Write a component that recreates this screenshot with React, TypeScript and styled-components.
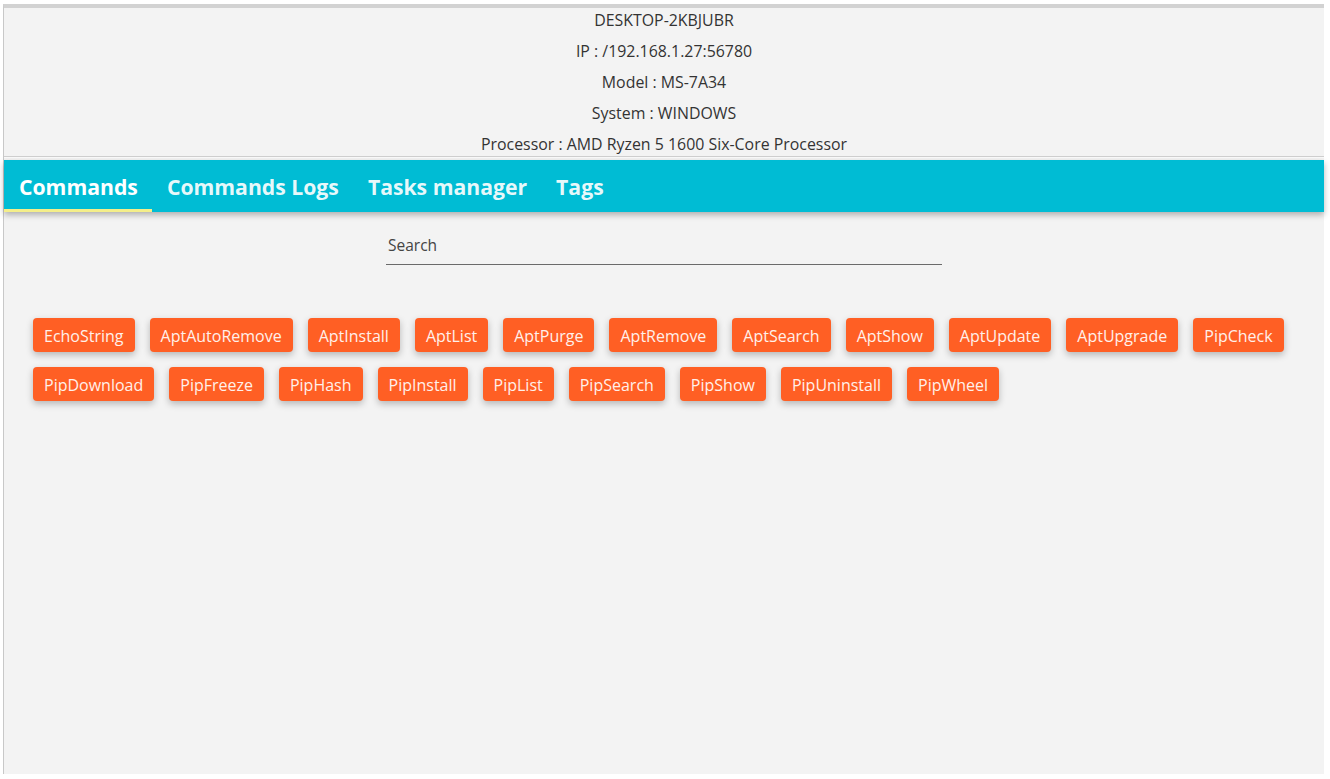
import * as React from "react";
import styled, { createGlobalStyle } from "styled-components";

const GlobalStyle = createGlobalStyle`
  html, body {
    margin: 0;
    padding: 0;
    background: #ffffff;
  }
  body {
    font-family: "Open Sans", "Noto Sans", sans-serif;
  }
`;

const Screen = styled.div`
  padding: 4px 0 0 3px;
  width: 1330px;
  height: 779px;
  box-sizing: border-box;
`;

const Window = styled.div`
  width: 1321px;
  height: 770px;
  box-sizing: border-box;
  display: flex;
  flex-direction: column;
  background: #f3f3f3;
  border-top: 4px solid #d2d2d2;
  border-left: 1px solid #c8c8c8;
`;

const Header = styled.div`
  display: flex;
  flex-direction: column;
  align-items: center;
  gap: 11px;
  padding-top: 2px;
`;

const InfoLine = styled.div`
  font-size: 15.9px;
  line-height: 20px;
  color: #333333;
`;

const Separator = styled.div`
  margin-top: 2px;
  height: 1px;
  background: #cfcfcf;
  border-bottom: 1px solid #fafafa;
`;

const TabBar = styled.div`
  margin-top: 2px;
  height: 52px;
  display: flex;
  background: #00bcd4;
  box-shadow: 0 3px 6px rgba(0, 0, 0, 0.28);
  position: relative;
  z-index: 1;
`;

const Tab = styled.div<{ $active?: boolean }>`
  display: flex;
  align-items: center;
  padding: 3px 14px 0 15px;
  box-sizing: border-box;
  font-size: 21.2px;
  font-weight: 700;
  color: ${(p) => (p.$active ? "#ffffff" : "rgba(255, 255, 255, 0.92)")};
  border-bottom: 3px solid ${(p) => (p.$active ? "#f4ee8a" : "transparent")};
`;

const Content = styled.div`
  display: flex;
  flex-direction: column;
`;

const SearchField = styled.div`
  align-self: center;
  margin-top: 20px;
  width: 556px;
  box-sizing: border-box;
  padding: 4px 2px 10px;
  font-size: 15.5px;
  line-height: 18px;
  color: #444444;
  border-bottom: 1px solid #6a6a6a;
`;

const CommandList = styled.div`
  display: flex;
  flex-wrap: wrap;
  gap: 15px 15px;
  margin-top: 53px;
  padding: 0 20px 0 29px;
`;

const CommandButton = styled.div`
  height: 34px;
  padding: 1px 11px 0;
  box-sizing: border-box;
  display: flex;
  align-items: center;
  border-radius: 4px;
  background: #ff5f24;
  color: #fff0ea;
  font-size: 16px;
  box-shadow: 0 3px 7px rgba(0, 0, 0, 0.25);
`;

const info = [
  "DESKTOP-2KBJUBR",
  "IP : /192.168.1.27:56780",
  "Model : MS-7A34",
  "System : WINDOWS",
  "Processor : AMD Ryzen 5 1600 Six-Core Processor",
];

const tabs = ["Commands", "Commands Logs", "Tasks manager", "Tags"];

const commands = [
  "EchoString",
  "AptAutoRemove",
  "AptInstall",
  "AptList",
  "AptPurge",
  "AptRemove",
  "AptSearch",
  "AptShow",
  "AptUpdate",
  "AptUpgrade",
  "PipCheck",
  "PipDownload",
  "PipFreeze",
  "PipHash",
  "PipInstall",
  "PipList",
  "PipSearch",
  "PipShow",
  "PipUninstall",
  "PipWheel",
];

export default function App() {
  return (
    <Screen>
      <GlobalStyle />
      <Window>
        <Header>
          {info.map((line) => (
            <InfoLine key={line}>{line}</InfoLine>
          ))}
        </Header>
        <Separator />
        <TabBar>
          {tabs.map((tab, i) => (
            <Tab key={tab} $active={i === 0}>
              {tab}
            </Tab>
          ))}
        </TabBar>
        <Content>
          <SearchField>Search</SearchField>
          <CommandList>
            {commands.map((cmd) => (
              <CommandButton key={cmd}>{cmd}</CommandButton>
            ))}
          </CommandList>
        </Content>
      </Window>
    </Screen>
  );
}
